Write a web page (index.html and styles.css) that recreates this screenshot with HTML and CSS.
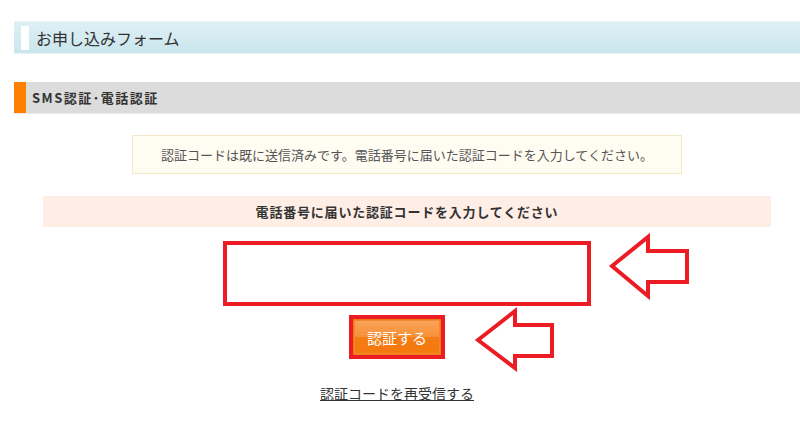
FILE: index.html
```html
<!DOCTYPE html>
<html lang="ja">
<head>
<meta charset="utf-8">
<title>お申し込みフォーム</title>
<link rel="stylesheet" href="styles.css">
</head>
<body>
<div class="page">
  <h1 class="title"><span class="title-mark"></span>お申し込みフォーム</h1>
  <h2 class="section"><span class="section-mark"></span>SMS認証･電話認証</h2>
  <div class="content">
    <div class="notice">認証コードは既に送信済みです。電話番号に届いた認証コードを入力してください。</div>
    <div class="label">電話番号に届いた認証コードを入力してください</div>
    <div class="input-row"><input class="code-input" type="text" aria-label="認証コード"></div>
    <div class="action-row">
      <div class="btn-frame"><button class="btn" type="button">認証する</button></div>
    </div>
    <div class="link-row"><a class="resend" href="#">認証コードを再受信する</a></div>
  </div>
</div>
<svg class="arrows" width="800" height="421" viewBox="0 0 800 421" aria-hidden="true">
  <polygon points="612,266 648,237 648,251 687,251 687,282 648,282 648,296" fill="#fff" stroke="#ec1c24" stroke-width="4" stroke-linejoin="miter"/>
  <polygon points="478,340 515,311 515,325 552,325 552,356 515,356 515,368" fill="#fff" stroke="#ec1c24" stroke-width="4" stroke-linejoin="miter"/>
</svg>
</body>
</html>
```
FILE: styles.css
```css
html, body {
  margin: 0;
  padding: 0;
  background: #fff;
}
body {
  font-family: "Noto Sans CJK JP", "Noto Sans", sans-serif;
  color: #333;
  width: 800px;
  height: 421px;
  overflow: hidden;
  position: relative;
}
.page {
  padding: 21px 0 0 14px;
}
.title {
  display: flex;
  align-items: center;
  height: 33px;
  margin: 0;
  box-sizing: border-box;
  border-top: 1px solid #e8f4f7;
  border-bottom: 1px solid #e6f2f5;
  background: linear-gradient(#dff0f5, #c9e6ed);
  font-size: 16px;
  font-weight: normal;
  color: #333;
  line-height: 1;
}
.title-mark {
  width: 8px;
  height: 24px;
  background: #fff;
  margin: 0 7px 0 7px;
}
.section {
  display: flex;
  align-items: center;
  height: 32px;
  margin: 28px 0 0;
  box-sizing: border-box;
  background: #dcdcdc;
  border-bottom: 1px solid #ececec;
  font-size: 13px;
  font-weight: bold;
  letter-spacing: 1.5px;
  color: #333;
}
.section-mark {
  width: 12px;
  height: 100%;
  background: #ff8000;
  margin-right: 6px;
}
.content {
  display: flex;
  flex-direction: column;
  align-items: center;
}
.notice {
  margin-top: 21px;
  width: 550px;
  height: 39px;
  box-sizing: border-box;
  background: #fffcf2;
  border: 1px solid #f1e9c9;
  display: flex;
  align-items: center;
  justify-content: center;
  font-size: 13px;
  color: #555;
}
.label {
  margin-top: 22px;
  width: 728px;
  height: 31px;
  background: #feeee6;
  display: flex;
  align-items: center;
  justify-content: center;
  font-size: 13px;
  font-weight: bold;
  letter-spacing: 0.8px;
  color: #333;
}
.input-row {
  margin-top: 14px;
}
.code-input {
  display: block;
  width: 368px;
  height: 65px;
  box-sizing: border-box;
  border: 4px solid #ec1c24;
  background: #fff;
  margin: 0;
  padding: 0;
  outline: none;
}
.action-row {
  margin-top: 9px;
  padding-right: 20px;
}
.btn-frame {
  border: 4px solid #ec1c24;
  padding: 1px;
  background: #f47a10;
}
.btn {
  display: block;
  width: 86px;
  height: 34px;
  border: 1px solid #f08a30;
  background: linear-gradient(#f8a457 0%, #f69139 48%, #f47c12 52%, #f47a0e 100%);
  color: #fff;
  font-family: "Noto Sans CJK JP", "Noto Sans", sans-serif;
  font-size: 15px;
  padding: 0;
  cursor: pointer;
}
.link-row {
  margin-top: 21px;
  padding-right: 20px;
}
.resend {
  font-size: 14px;
  color: #333;
  text-decoration: underline;
}
.arrows {
  position: absolute;
  top: 0;
  left: 0;
  pointer-events: none;
}
```
